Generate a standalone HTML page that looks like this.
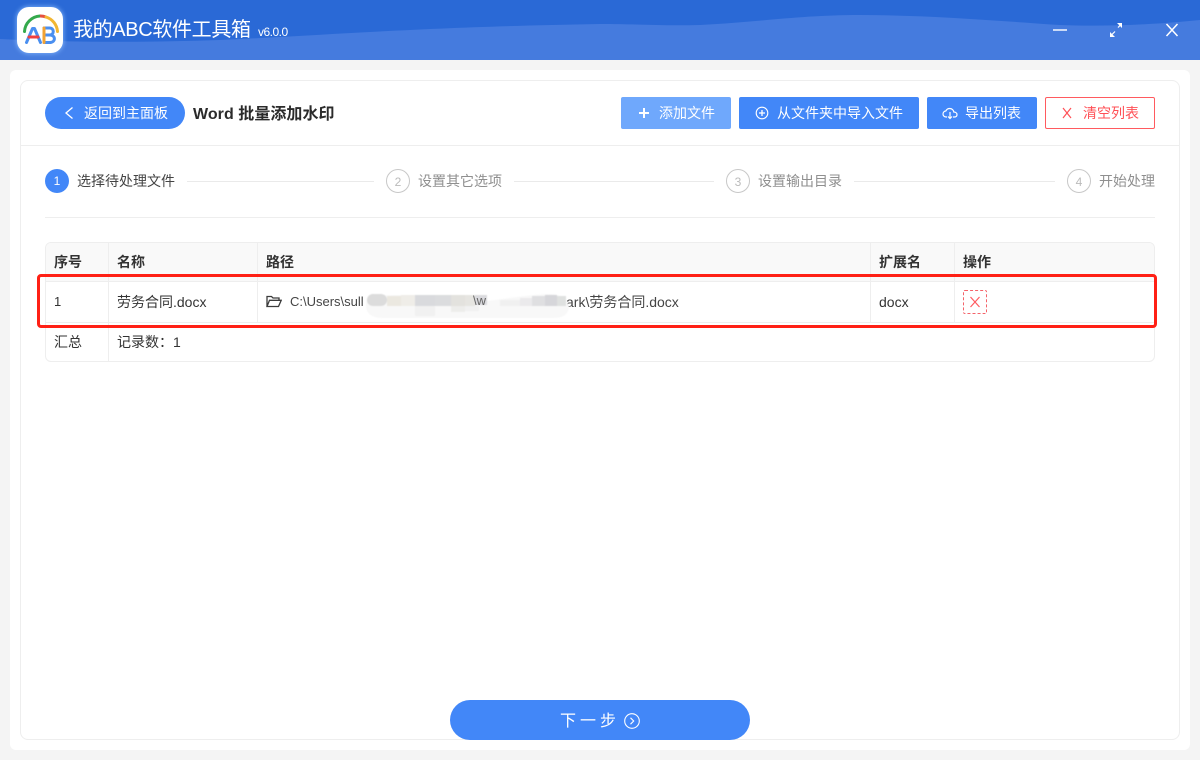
<!DOCTYPE html>
<html lang="zh">
<head>
<meta charset="utf-8">
<title>我的ABC软件工具箱</title>
<style>
*{box-sizing:border-box;margin:0;padding:0}
html,body{width:1200px;height:760px;overflow:hidden;background:#f4f4f4}
body{position:relative;font-family:"Liberation Sans","Noto Sans CJK SC",sans-serif;color:#333;font-size:14px}
.a{position:absolute;white-space:nowrap}
.t{position:absolute;white-space:nowrap;line-height:20px;height:20px}
.btn{position:absolute;top:97px;height:32px;background:#4287f8;border-radius:2px;color:#fff}
.btn span{position:absolute;top:6px;line-height:20px;white-space:nowrap}
.btn svg{position:absolute;top:0;left:0}
.circle{position:absolute;top:169px;width:24px;height:24px;border-radius:50%;border:1px solid #c8c8c8;color:#bbb;text-align:center;line-height:24px;font-size:12px}
.line{position:absolute;top:181px;height:1px;background:#eaeaea}
.gray{color:#8f8f8f}
.h{font-weight:bold;color:#333}
.v{position:absolute;width:1px;background:#eeeeee}
.hz{position:absolute;height:1px;background:#eeeeee}
</style>
</head>
<body>
<svg class="a" style="left:0;top:0" width="1200" height="60" viewBox="0 0 1200 60">
<rect width="1200" height="60" fill="#2a69d6"/>
<path d="M0 39C60 42 130 43 220 40C330 35 420 27 600 24C640 24 660 26 700 25C760 22 800 15 860 15C930 15 1000 21 1060 25C1110 27 1160 24 1200 20V60H0Z" fill="#457bde"/>
</svg>
<!-- logo -->
<div class="a" style="left:17px;top:7px;width:46px;height:46px;border-radius:12px;background:#fff;box-shadow:0 0 4px 1px rgba(130,180,250,.8)"></div>
<svg class="a" style="left:17px;top:7px" width="46" height="46" viewBox="0 0 46 46">
<path d="M7.500 24.500A16.500 16.500 0 0 1 23 9" fill="none" stroke="#34a94c" stroke-width="3" stroke-linecap="round"/>
<path d="M23 9A16.500 16.500 0 0 1 29 10" fill="none" stroke="#e5503f" stroke-width="3"/>
<path d="M29 10A16.500 16.500 0 0 1 40.500 24.500" fill="none" stroke="#f2b632" stroke-width="3" stroke-linecap="round"/>
<path d="M9.500 35.500L15.500 21.500H17.500L23.500 35.500" fill="none" stroke="#4a8ff0" stroke-width="3" stroke-linecap="round" stroke-linejoin="round"/>
<path d="M12 30H21" stroke="#ef4040" stroke-width="3" stroke-linecap="round"/>
<path d="M27 21H32.500C37.500 21 37.500 28 32.500 28H27M32.500 28C39 28 39 35.500 32.500 35.500H27" fill="none" stroke="#4a8ff0" stroke-width="3" stroke-linecap="round" stroke-linejoin="round"/>
<path d="M27 21V35.500" stroke="#f2a232" stroke-width="3" stroke-linecap="round"/>
</svg>
<div class="t" style="left:73px;top:20px;font-size:20px;color:#fff;line-height:20px;letter-spacing:-.35px">我的ABC软件工具箱</div>
<div class="t" style="left:258px;top:22px;font-size:12px;color:#fff;letter-spacing:-.5px">v6.0.0</div>
<!-- window controls -->
<svg class="a" style="left:1040px;top:15px" width="150" height="30" viewBox="0 0 150 30" fill="none" stroke="#fff">
<path d="M13 15H27" stroke-width="1.600" opacity=".9"/>
<path d="M71 20.500L75 16.500M78 12.500L81.500 9" stroke-width="1.200"/>
<path d="M70 17V22H75Z M77 8H82V13Z" fill="#fff" stroke="none"/>
<path d="M126.500 9L137.500 21M137.500 9L126.500 21" stroke-width="1.500"/>
</svg>

<!-- panels -->
<div class="a" style="left:10px;top:70px;width:1180px;height:680px;background:#fff;border-radius:6px"></div>
<div class="a" style="left:20px;top:80px;width:1160px;height:660px;background:#fff;border:1px solid #eeeeee;border-radius:8px"></div>
<div class="hz" style="left:21px;top:145px;width:1158px"></div>

<!-- header -->
<div class="btn" style="left:45px;width:140px;border-radius:16px">
<svg width="40" height="32" fill="none" stroke="#fff" stroke-width="1.300"><path d="M27.500 10.500L21 16L27.500 21.500"/></svg>
<span style="left:39px;font-size:14px;letter-spacing:0">返回到主面板</span>
</div>
<div class="t" style="left:193px;top:105px;font-size:16px;font-weight:bold;color:#2b2b2b;line-height:20px;letter-spacing:.05px">Word 批量添加水印</div>

<div class="btn" style="left:621px;width:110px;background:#6fa8fc">
<svg width="40" height="32" fill="none" stroke="#fff" stroke-width="2"><path d="M23 11V21M18 16H28"/></svg>
<span style="left:38px">添加文件</span>
</div>
<div class="btn" style="left:739px;width:180px">
<svg width="40" height="32" fill="none" stroke="#fff"><circle cx="23" cy="16" r="5.800" stroke-width="1.100"/><path d="M23 13V19M20 16H26" stroke-width="1.300"/></svg>
<span style="left:38px">从文件夹中导入文件</span>
</div>
<div class="btn" style="left:927px;width:110px">
<svg width="40" height="32" fill="none" stroke="#fff" stroke-width="1.200"><path d="M20 20H19.500C17 20 16 18.500 16 17C16 15.300 17.300 14 18.800 14C19.500 12.500 21 11.500 22.700 11.500C25 11.500 26.600 13.200 26.800 15C28.500 15 30 16 30 17.700C30 19 29 20 27 20H26"/><path d="M23 15V21.500M21 19.500L23 21.500L25 19.500"/></svg>
<span style="left:38px">导出列表</span>
</div>
<div class="btn" style="left:1045px;width:110px;background:#fff;border:1px solid #ff5a5f;color:#ff5056">
<svg width="40" height="30" fill="none" stroke="#ff5056" stroke-width="1.200"><path d="M17 10L25 20M25 10L17 20"/></svg>
<span style="left:37px;top:5px">清空列表</span>
</div>

<!-- steps -->
<div class="a" style="left:45px;top:169px;width:24px;height:24px;border-radius:50%;background:#4287f8;color:#fff;text-align:center;line-height:24px;font-size:12px">1</div>
<div class="t" style="left:77px;top:171px;color:#444">选择待处理文件</div>
<div class="line" style="left:187px;width:187px"></div>
<div class="circle" style="left:386px">2</div>
<div class="t gray" style="left:418px;top:171px">设置其它选项</div>
<div class="line" style="left:514px;width:200px"></div>
<div class="circle" style="left:726px">3</div>
<div class="t gray" style="left:758px;top:171px">设置输出目录</div>
<div class="line" style="left:854px;width:201px"></div>
<div class="circle" style="left:1067px">4</div>
<div class="t gray" style="left:1099px;top:171px">开始处理</div>
<div class="hz" style="left:45px;top:217px;width:1110px"></div>

<!-- table -->
<div class="a" style="left:45px;top:242px;width:1110px;height:120px;border:1px solid #eeeeee;border-radius:6px;overflow:hidden">
<div class="a" style="left:0;top:0;width:1110px;height:38px;background:#f9f9f9"></div>
</div>
<div class="hz" style="left:46px;top:281px;width:1108px"></div>
<div class="hz" style="left:46px;top:322px;width:1108px"></div>
<div class="v" style="left:108px;top:243px;height:118px"></div>
<div class="v" style="left:257px;top:243px;height:79px"></div>
<div class="v" style="left:870px;top:243px;height:79px"></div>
<div class="v" style="left:954px;top:243px;height:79px"></div>

<div class="t h" style="left:54px;top:252px">序号</div>
<div class="t h" style="left:117px;top:252px">名称</div>
<div class="t h" style="left:266px;top:252px">路径</div>
<div class="t h" style="left:879px;top:252px">扩展名</div>
<div class="t h" style="left:963px;top:252px">操作</div>

<div class="t" style="left:54px;top:292px;font-size:13px">1</div>
<div class="t" style="left:117px;top:292px">劳务合同.docx</div>
<svg class="a" style="left:266px;top:295px" width="16" height="13" viewBox="0 0 16 13" fill="none" stroke="#3c3c3c" stroke-width="1.300"><path d="M1 11.500V1.500H5.500L7 3H13V5.300M1 11.500H12.500L15.200 5.300H3.500L1 11.500Z"/></svg>
<div class="t" style="left:290px;top:292px;font-size:13px;color:#444">C:\Users\sull</div>
<div class="t" style="left:566px;top:292px;font-size:14px;color:#444">ark\劳务合同.docx</div>
<!-- mosaic -->
<svg class="a" style="left:365px;top:292px;filter:blur(.5px)" width="206" height="28" viewBox="0 0 206 28">
<path d="M1 14C1 5 5 2 10 2C18 2 22 4 27 3H108C112 6 118 8 122 9C145 6 170 2 185 2C195 2 202 7 204 14C204 22 198 26 188 26H18C8 26 1 22 1 14Z" fill="#f8f8f8"/>
<rect x="2" y="2" width="20" height="12" rx="6" fill="#dcdcdc"/>
<rect x="22" y="4" width="14" height="10" fill="#ebe8e0"/>
<rect x="36" y="3" width="14" height="11" fill="#efede8"/>
<rect x="50" y="3" width="20" height="11" fill="#d9dadd"/>
<rect x="70" y="3" width="16" height="11" fill="#dbdcde"/>
<rect x="86" y="3" width="14" height="11" fill="#e3e2de"/>
<rect x="100" y="3" width="10" height="13" fill="#e6e5e1"/>
<rect x="110" y="3" width="12" height="10" fill="#dadade"/>
<rect x="135" y="8" width="20" height="6" fill="#f0f0f0"/>
<rect x="155" y="6" width="12" height="8" fill="#ebeaec"/>
<rect x="167" y="4" width="13" height="10" fill="#dfdfe1"/>
<rect x="180" y="3" width="12" height="11" fill="#d6d6da"/>
<rect x="192" y="4" width="9" height="10" fill="#dfe1e0"/>
<rect x="50" y="14" width="20" height="10" fill="#f1f1f1"/>
<rect x="86" y="14" width="14" height="6" fill="#ededeb"/>
<rect x="100" y="14" width="14" height="5" fill="#f1f1f1"/>
</svg>
<div class="t" style="left:473px;top:291px;font-size:13px;color:#666">\w</div>
<div class="t" style="left:879px;top:292px">docx</div>
<div class="a" style="left:963px;top:290px;width:24px;height:24px;border:1px dashed #f4636a;border-radius:2px"></div>
<svg class="a" style="left:963px;top:290px" width="24" height="24" fill="none" stroke="#ff5a60" stroke-width="1.200"><path d="M7.500 7L16.500 17M16.500 7L7.500 17"/></svg>

<div class="t" style="left:54px;top:332px">汇总</div>
<div class="t" style="left:117px;top:332px">记录数<span style="font-family:'Noto Sans CJK TC',sans-serif">：</span>1</div>

<!-- highlight -->
<div class="a" style="left:37px;top:274px;width:1120px;height:54px;border:3px solid #ff2015;border-radius:4px"></div>

<!-- next -->
<div class="a" style="left:450px;top:700px;width:300px;height:40px;border-radius:20px;background:#4287f8"></div>
<div class="t" style="left:560px;top:712px;font-size:16px;color:#fff;letter-spacing:4px">下一步</div>
<svg class="a" style="left:623px;top:712px" width="18" height="18" fill="none" stroke="#fff" stroke-width="1.100"><circle cx="9" cy="9" r="7.300"/><path d="M7.500 5.800L10.700 9L7.500 12.200"/></svg>
</body>
</html>
